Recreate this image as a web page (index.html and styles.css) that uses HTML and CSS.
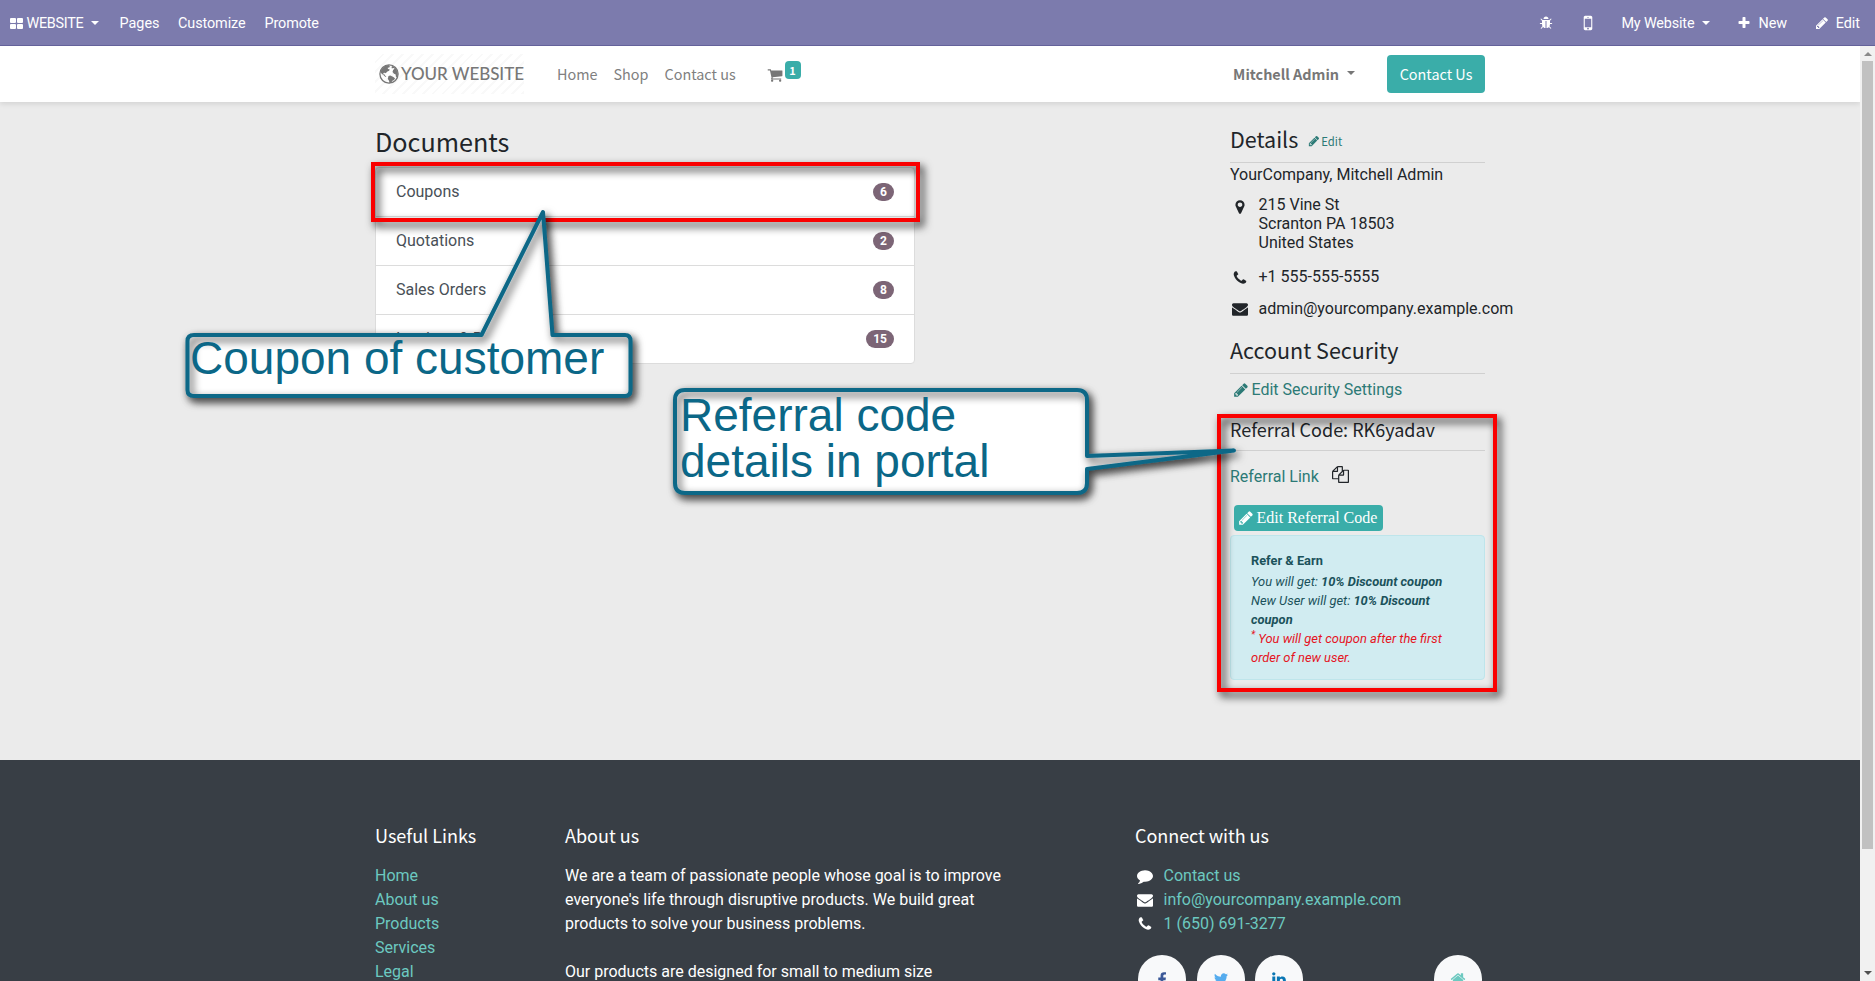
FILE: index.html
```html
<!DOCTYPE html>
<html lang="en">
<head>
<meta charset="utf-8">
<title>My Portal | My Website</title>
<link rel="stylesheet" href="styles.css">
</head>
<body>
<svg class="sprite" aria-hidden="true">
<symbol id="pencil" viewBox="0 0 1792 1792"><path d="M491 1536l91-91-235-235-91 91v107h128v128h107zm523-928q0-22-22-22-10 0-17 7l-542 542q-7 7-7 17 0 22 22 22 10 0 17-7l542-542q7-7 7-17zm-54-192l416 416-832 832h-416v-416zm683 96q0 53-37 90l-166 166-416-416 166-165q36-38 90-38 53 0 91 38l235 234q37 39 37 91z"/></symbol>
<symbol id="envelope" viewBox="0 0 1792 1792"><path d="M1792 710v794q0 66-47 113t-113 47h-1472q-66 0-113-47t-47-113v-794q44 49 101 87 362 246 497 345 57 42 92.500 65.500t94.500 48 110 24.500h2q51 0 110-24.500t94.500-48 92.500-65.500q170-123 498-345 57-39 100-87zm0-294q0 79-49 151t-122 123q-376 261-468 325-10 7-42.500 30.500t-54 38-52 32.500-57.500 27-50 9h-2q-23 0-50-9t-57.500-27-52-32.500-54-38-42.500-30.500q-91-64-262-182.500t-205-142.500q-62-42-117-115.500t-55-136.500q0-78 41.500-130t118.500-52h1472q65 0 112.500 47t47.500 113z"/></symbol>
<symbol id="phone" viewBox="0 0 1792 1792"><path d="M1600 1240q0 27-10 70.500t-21 68.500q-21 50-122 106-94 51-186 51-27 0-53-3.500t-57.500-12.500-47-14.500-55.500-20.500-49-18q-98-35-175-83-127-79-264-216t-216-264q-48-77-83-175-3-9-18-49t-20.500-55.500-14.500-47-12.500-57.500-3.500-53q0-92 51-186 56-101 106-122 25-11 68.500-21t70.500-10q14 0 21 3 18 6 53 76 11 19 30 54t35 63.500 31 53.500q3 4 17.500 25t21.500 35.500 7 28.500q0 20-28.500 50t-62 55-62 53-28.500 46q0 9 5 22.500t8.500 20.500 14 24 11.500 19q76 137 174 235t235 174q2 1 19 11.500t24 14 20.500 8.500 22.500 5q18 0 46-28.500t53-62 55-62 50-28.500q14 0 28.500 7t35.500 21.500 25 17.500q25 15 53.500 31t63.500 35 54 30q70 35 76 53 3 7 3 21z"/></symbol>
<symbol id="marker" viewBox="0 0 1792 1792"><path d="M1152 640q0-106-75-181t-181-75-181 75-75 181 75 181 181 75 181-75 75-181zm256 0q0 109-33 179l-364 774q-16 33-47.500 52t-67.500 19-67.500-19-46.500-52l-365-774q-33-70-33-179 0-212 150-362t362-150 362 150 150 362z"/></symbol>
<symbol id="bug" viewBox="0 0 1792 1792"><path d="M1696 960q0 26-19 45t-45 19h-224q0 171-67 290l208 209q19 19 19 45t-19 45q-18 19-45 19t-45-19l-198-197q-5 5-15 13t-42 28.500-65 36.500-82 29-97 13v-896h-128v896q-51 0-101.500-13.500t-87-33-66-39-43.500-32.500l-15-14-183 207q-20 21-48 21-24 0-43-16-19-18-20.500-44.500t15.500-46.500l202-227q-58-114-58-274h-224q-26 0-45-19t-19-45 19-45 45-19h224v-294l-173-173q-19-19-19-45t19-45 45-19 45 19l173 173h844l173-173q19-19 45-19t45 19 19 45-19 45l-173 173v294h224q26 0 45 19t19 45zm-480-576h-640q0-133 93.500-226.500t226.500-93.500 226.500 93.500 93.500 226.500z"/></symbol>
<symbol id="mobile" viewBox="0 0 1792 1792"><path d="M976 1408q0-33-23.500-56.500t-56.500-23.500-56.500 23.500-23.500 56.500 23.500 56.500 56.500 23.500 56.500-23.500 23.500-56.500zm208-160v-704q0-13-9.500-22.500t-22.500-9.500h-512q-13 0-22.500 9.500t-9.500 22.500v704q0 13 9.500 22.500t22.500 9.500h512q13 0 22.500-9.500t9.500-22.500zm-192-848q0-16-16-16h-160q-16 0-16 16t16 16h160q16 0 16-16zm288-16v1024q0 52-38 90t-90 38h-512q-52 0-90-38t-38-90v-1024q0-52 38-90t90-38h512q52 0 90 38t38 90z"/></symbol>
<symbol id="plus" viewBox="0 0 1792 1792"><path d="M1600 736v192q0 40-28 68t-68 28h-416v416q0 40-28 68t-68 28h-192q-40 0-68-28t-28-68v-416h-416q-40 0-68-28t-28-68v-192q0-40 28-68t68-28h416v-416q0-40 28-68t68-28h192q40 0 68 28t28 68v416h416q40 0 68 28t28 68z"/></symbol>
<symbol id="cart" viewBox="0 0 1792 1792"><path d="M704 1536q0 52-38 90t-90 38-90-38-38-90 38-90 90-38 90 38 38 90zm896 0q0 52-38 90t-90 38-90-38-38-90 38-90 90-38 90 38 38 90zm128-1088v512q0 24-16.500 42.500t-40.500 21.500l-1044 122q13 60 13 70 0 16-24 64h920q26 0 45 19t19 45-19 45-45 19h-1024q-26 0-45-19t-19-45q0-11 8-31.500t16-36 21.500-40 15.500-29.500l-177-823h-204q-26 0-45-19t-19-45 19-45 45-19h256q16 0 28.500 6.500t19.500 15.500 13 24.500 8 26 5.500 29.500 4.500 26h1201q26 0 45 19t19 45z"/></symbol>
<symbol id="comment" viewBox="0 0 1792 1792"><path d="M1792 896q0 174-120 321.500t-326 233-450 85.500q-70 0-145-8-198 175-460 242-49 14-114 22-17 2-30.500-9t-17.500-29v-1q-3-4-.5-12t2-10 4.500-9.500l6-9 7-8.500 8-9q7-8 31-34.500t34.500-38 31-39.500 32.500-51 27-59 26-76q-157-89-247.500-220t-90.500-281q0-130 71-248.500t191-204.500 286-136.500 348-50.500q244 0 450 85.500t326 233 120 321.500z"/></symbol>
<symbol id="files" viewBox="0 0 1792 1792"><path d="M1696 384q40 0 68 28t28 68v1216q0 40-28 68t-68 28h-960q-40 0-68-28t-28-68v-288h-544q-40 0-68-28t-28-68v-672q0-40 20-88t48-76l408-408q28-28 76-48t88-20h416q40 0 68 28t28 68v328q68-40 128-40h416zm-544 213l-299 299h299v-299zm-640-384l-299 299h299v-299zm196 647l316-316v-416h-384v416q0 40-28 68t-68 28h-416v640h512v-256q0-40 20-88t48-76zm956 804v-1152h-384v416q0 40-28 68t-68 28h-416v640h896z"/></symbol>
<symbol id="twitter" viewBox="0 0 1792 1792"><path d="M1684 408q-67 98-162 167 1 14 1 42 0 130-38 259.500t-115.500 248.500-184.500 210.500-258 146-323 54.500q-271 0-496-145 35 4 78 4 225 0 401-138-105-2-188-64.500t-114-159.500q33 5 61 5 43 0 85-11-112-23-185.500-111.500t-73.500-205.500v-4q68 38 146 41-66-44-105-115t-39-154q0-88 44-163 121 149 294.500 238.500t371.500 99.500q-8-38-8-74 0-134 94.500-228.500t228.500-94.500q140 0 236 102 109-21 205-78-37 115-142 178 93-10 186-50z"/></symbol>
<symbol id="facebook" viewBox="0 0 1792 1792"><path d="M1343 12v264h-157q-86 0-116 36t-30 108v189h293l-39 296h-254v759h-306v-759h-255v-296h255v-218q0-186 104-288.500t277-102.500q147 0 228 12z" transform="translate(0 128)"/></symbol>
<symbol id="linkedin" viewBox="0 0 1792 1792"><path d="M477 625v991h-330v-991h330zm21-306q1 73-50.500 122t-135.500 49h-2q-82 0-132-49t-50-122q0-74 51.500-122.500t134.500-48.500 133 48.500 51 122.500zm1166 729v568h-329v-530q0-105-40.500-164.500t-126.500-59.500q-63 0-105.500 34.500t-63.500 85.500q-11 30-11 81v553h-329q2-399 2-647t-1-296l-1-48h329v144h-2q20-32 41-56t56.500-52 87-43.500 114.500-15.500q171 0 275 113.500t104 332.500z"/></symbol>
<symbol id="home" viewBox="0 0 1792 1792"><path d="M1472 992v480q0 26-19 45t-45 19h-384v-384h-256v384h-384q-26 0-45-19t-19-45v-480q0-1 .5-3t.5-3l575-474 575 474q1 2 1 6zm223-69l-62 74q-8 9-21 11h-3q-13 0-21-7l-692-577-692 577q-12 8-24 7-13-2-21-11l-62-74q-8-10-7-23.500t11-21.500l719-599q32-26 76-26t76 26l244 204v-195q0-14 9-23t23-9h192q14 0 23 9t9 23v408l219 182q10 8 11 21.500t-7 23.500z"/></symbol>
</svg>

<nav class="topbar">
  <div class="topbar-left">
    <a class="top-item brand"><svg class="grid-icon" viewBox="0 0 13 11"><rect width="6" height="5" rx="1"/><rect x="7" width="6" height="5" rx="1"/><rect y="6" width="6" height="5" rx="1"/><rect x="7" y="6" width="6" height="5" rx="1"/></svg><span>WEBSITE</span><i class="caret"></i></a>
    <a class="top-item pages">Pages</a>
    <a class="top-item customize">Customize</a>
    <a class="top-item promote">Promote</a>
  </div>
  <div class="topbar-right">
    <svg class="ic14 bug"><use href="#bug"/></svg>
    <svg class="ic-mobile"><use href="#mobile"/></svg>
    <a class="top-item my-site">My Website<i class="caret"></i></a>
    <a class="top-item new"><svg class="ic14"><use href="#plus"/></svg>New</a>
    <a class="top-item edit"><svg class="ic14"><use href="#pencil"/></svg>Edit</a>
  </div>
</nav>

<div class="viewport">
<div class="page">
  <header class="site-header">
    <div class="container header-row">
      <div class="logo">
        <svg class="globe" viewBox="0 0 20 20"><circle cx="10" cy="10" r="9.1" fill="none" stroke="#777" stroke-width="1.3"/><path fill="#777" d="M2 6.500C3.500 3 6.500 1.200 9.500 1l1.400 1.100-.6 1.300-1.600.4.300 1.200 1.600.2-.4 1.500-1.800.7-1.700 1.800-1.300-.5-1.100.3.200 1.400 1.300.2.600 1.500 1 .5-.9.300L4.700 11.300 2.400 9.400 1.500 8zM9.500 12l1.700-.5 2.800 1.200 2 1.500-.9 1.700-1.700.8-1.200 2-1.700.5-.4-2.100-1.300-2.300zM13 1.700l3.500 2.300 2 3.500.4 3.500-.9 2.500-1.200-1.100-.1-1.900-1.700-.7-1.500-1.700.6-2.200 1.500-1.300-1.400-.6-1.300.4-.4-1.300.9-1.300z"/></svg><span>YOUR WEBSITE</span>
      </div>
      <a class="nav-link home">Home</a><a class="nav-link shop">Shop</a><a class="nav-link contact">Contact us</a>
      <span class="cart"><svg><use href="#cart"/></svg><b>1</b></span>
      <a class="user">Mitchell Admin<i class="caret"></i></a>
      <a class="cta">Contact Us</a>
    </div>
  </header>

  <main class="container main">
    <section class="docs">
      <h3>Documents</h3>
      <div class="list">
        <a class="row"><span>Coupons</span><b>6</b></a>
        <a class="row"><span>Quotations</span><b>2</b></a>
        <a class="row"><span>Sales Orders</span><b>8</b></a>
        <a class="row"><span>Invoices &amp; Bills</span><b>15</b></a>
      </div>
    </section>
    <aside class="side">
      <div class="side-title details"><h4>Details</h4><a><svg><use href="#pencil"/></svg>Edit</a></div>
      <p class="company">YourCompany, Mitchell Admin</p>
      <div class="info address"><svg><use href="#marker"/></svg><p>215 Vine St<br>Scranton PA 18503<br>United States</p></div>
      <div class="info tel"><svg><use href="#phone"/></svg><p>+1 555-555-5555</p></div>
      <div class="info mail"><svg><use href="#envelope"/></svg><p>admin@yourcompany.example.com</p></div>
      <div class="side-title security"><h4>Account Security</h4></div>
      <a class="sec-link"><svg><use href="#pencil"/></svg>Edit Security Settings</a>
      <div class="side-title referral"><h5>Referral Code: RK6yadav</h5></div>
      <div class="ref-link"><a>Referral Link</a><svg><use href="#files"/></svg></div>
      <a class="ref-btn"><svg><use href="#pencil"/></svg>Edit Referral Code</a>
      <div class="alert">
        <strong class="alert-title">Refer &amp; Earn</strong>
        <p>You will get: <b>10% Discount coupon</b></p>
        <p>New User will get: <b>10% Discount<br>coupon</b></p>
        <p class="warn"><sup>*</sup> You will get coupon after the first<br>order of new user.</p>
      </div>
    </aside>
  </main>

  <footer class="footer">
    <div class="container foot-row">
      <div class="links"><h5>Useful Links</h5><a>Home</a><a>About us</a><a>Products</a><a>Services</a><a>Legal</a></div>
      <div class="about"><h5>About us</h5><p>We are a team of passionate people whose goal is to improve<br>everyone's life through disruptive products. We build great<br>products to solve your business problems.<br><br>Our products are designed for small to medium size</p></div>
      <div class="connect"><h5>Connect with us</h5>
        <div class="c-row"><svg><use href="#comment"/></svg><a>Contact us</a></div>
        <div class="c-row"><svg><use href="#envelope"/></svg><a>info@yourcompany.example.com</a></div>
        <div class="c-row"><svg><use href="#phone"/></svg><a>1 (650) 691-3277</a></div>
        <div class="social">
          <span class="fb"><svg><use href="#facebook"/></svg></span><span class="tw"><svg><use href="#twitter"/></svg></span><span class="li"><svg><use href="#linkedin"/></svg></span><span class="hm"><svg><use href="#home"/></svg></span>
        </div>
      </div>
    </div>
  </footer>
</div>
<div class="scrollbar"><i class="up"></i><div class="thumb"></div><i class="down"></i></div>
</div>

<svg class="notes" width="1875" height="981" viewBox="0 0 1875 981">
  <defs>
    <filter id="shade" filterUnits="userSpaceOnUse" x="0" y="0" width="1875" height="981"><feDropShadow dx="3" dy="4" stdDeviation="4" flood-color="#000" flood-opacity=".75"/></filter>
    <filter id="shade-box" filterUnits="userSpaceOnUse" x="0" y="0" width="1875" height="981"><feDropShadow dx="3.500" dy="4.500" stdDeviation="4.500" flood-color="#000" flood-opacity=".9"/></filter>
    <path id="bubble-a" d="M194 335H481.500L543 212 552.500 335H625Q630.500 335 630.500 341V390Q630.500 396 625 396H194Q187.500 396 187.500 390V341Q187.500 335 194 335Z"/>
    <path id="bubble-b" d="M685 390H1077Q1087 390 1087 400V456L1234 450.500 1087 469V483Q1087 493 1077 493H685Q675 493 675 483V400Q675 390 685 390Z"/>
  </defs>
  <g fill="none" stroke="#fa0000" stroke-width="4" filter="url(#shade-box)">
    <rect x="373" y="164" width="545" height="56"/>
    <rect x="1219" y="416" width="276" height="274"/>
  </g>
  <g stroke-linejoin="round">
    <use href="#bubble-a" fill="#fff" filter="url(#shade)"/>
    <use href="#bubble-b" fill="#fff" filter="url(#shade)"/>
    <use href="#bubble-a" fill="none" stroke="#0b6787" stroke-width="4" filter="url(#shade)"/>
    <use href="#bubble-b" fill="none" stroke="#0b6787" stroke-width="4" filter="url(#shade)"/>
  </g>
  <g class="note-text">
    <text x="190" y="373.500">Coupon of customer</text>
    <text x="680" y="431">Referral code</text>
    <text x="680" y="477">details in portal</text>
  </g>
</svg>
</body>
</html>
```
FILE: styles.css
```css
* { box-sizing: border-box; }
body { margin: 0; height: 981px; overflow: hidden; position: relative; background: #ebebeb; color: #212529; font: 16px/24px Roboto, "Liberation Sans", sans-serif; }
h3, h4, h5, p { margin: 0; font-weight: 400; }
svg { display: block; flex: none; fill: currentColor; }
i { font-style: normal; }
.sprite { position: absolute; width: 0; height: 0; }
h3, h4, h5, .nav-link, .user, .cta, .cart b, .details a { font-family: "Noto Sans CJK SC", "Open Sans", sans-serif; }

.topbar { height: 46px; background: #7c7bad; border-bottom: 1px solid #64629a; color: #fff; display: flex; justify-content: space-between; padding: 0 15px 0 10px; font-size: 14.400px; line-height: 46px; }
.topbar-left, .topbar-right { display: flex; align-items: center; height: 46px; padding-top: 2px; }
.top-item { display: flex; align-items: center; white-space: nowrap; }
.caret { width: 0; height: 0; border: 4.500px solid transparent; border-top-color: currentColor; border-bottom: 0; margin: -3px 0 0 8px; }
.grid-icon { width: 13px; height: 11px; margin: -2px 3.500px 0 0; }
.brand { width: 109.500px; letter-spacing: -.3px; }
.pages { width: 58.500px; }
.customize { width: 86.500px; letter-spacing: -.08px; }
.promote { letter-spacing: -.12px; }
.ic14 { width: 14px; height: 14px; margin-top: -2px; }
.bug { margin-right: 25px; }
.ic-mobile { width: 20px; height: 20px; margin: -2px 23px 0 0; }
.my-site { margin-right: 27px; letter-spacing: -.15px; }
.new { margin-right: 27.500px; }
.new .ic14, .edit .ic14 { margin-right: 7px; }

.viewport { display: flex; height: 935px; overflow: hidden; }
.page { width: 1860px; height: 935px; overflow: hidden; }
.scrollbar { width: 15px; background: #f1f1f1; display: flex; flex-direction: column; align-items: center; }
.up { border: 4px solid transparent; border-bottom: 4px solid #8a8a8a; border-top: 0; margin: 6px 0 5px; }
.thumb { width: 11px; height: 788px; background: #c1c1c1; }
.down { border: 4px solid transparent; border-top: 4px solid #505050; border-bottom: 0; margin-top: auto; margin-bottom: 6px; }
.container { width: 1110px; margin: 0 auto; }

.site-header { height: 56px; background: #fff; box-shadow: 0 2px 5px rgba(0, 0, 0, .1); position: relative; }
.header-row { display: flex; align-items: center; height: 56px; }
.logo { width: 149px; height: 40px; margin-right: 33px; padding-left: 4px; display: flex; align-items: center; color: #777; font: 500 17px/42px Lato, sans-serif; letter-spacing: -.05px; white-space: nowrap; background: repeating-linear-gradient(135deg, #fff 0 5px, #f9f9f9 5px 7px); }
.globe { width: 20px; height: 20px; margin-right: 2px; }
.nav-link { color: #808080; font-size: 14.400px; white-space: nowrap; }
.home { width: 56.500px; } .shop { width: 51px; } .contact { width: 102px; }
.cart { display: flex; color: #777; }
.cart svg { width: 16px; height: 16px; margin-top: 1px; }
.cart b { width: 16px; height: 18px; margin: -5px 0 0 2px; border-radius: 4px; background: #3aada9; color: #fff; font-size: 11px; line-height: 18px; text-align: center; }
.user { margin-left: auto; color: #777; font-weight: 700; font-size: 14.400px; display: flex; align-items: center; }
.cta { margin-left: 32px; width: 98px; height: 38px; border-radius: 4px; background: #3aada9; color: #fff; font-size: 14.400px; line-height: 37px; text-align: center; }

.main { height: 658px; display: flex; justify-content: space-between; }
.docs { width: 540px; padding-top: 23px; }
.docs h3 { font-size: 25.200px; line-height: 33px; height: 42px; }
.list { border: 1px solid #dcdcdc; border-radius: 4px; background: #fff; }
.row { display: flex; justify-content: space-between; align-items: center; height: 49px; padding: 0 20px; color: #495057; border-bottom: 1px solid #dcdcdc; }
.row:last-child { border-bottom: 0; height: 48px; }
.row b { min-width: 21px; height: 18px; padding: 0 7px; border-radius: 9px; background: #7c6576; color: #fff; font-size: 12px; line-height: 18px; text-align: center; }

.side { width: 255px; padding-top: 22px; }
.side-title { border-bottom: 1px solid #d0d0d0; display: flex; align-items: center; white-space: nowrap; }
.side h4 { font-size: 21.500px; line-height: 30px; }
.details { height: 39px; padding-bottom: 8px; }
.details a { display: flex; align-items: center; color: #2c7a76; font-size: 11.300px; margin: 4px 0 0 10px; }
.details a svg { width: 12px; height: 12px; margin-right: 1px; }
.company { line-height: 24px; }
.info { display: flex; white-space: nowrap; }
.info svg { width: 16px; height: 16px; margin: 3px 10.500px 0 2px; }
.info p { line-height: 19px; }
.address { margin-top: 8px; }
.address svg { margin-top: 4px; }
.tel { margin-top: 15px; }
.mail { margin-top: 13px; }
.mail svg { margin-top: 2px; }
.security { margin-top: 16px; height: 40px; padding-bottom: 8px; }
.sec-link { display: flex; align-items: center; height: 30px; padding: 2px 0 0 3px; color: #2c7a76; }
.sec-link svg, .ref-btn svg { width: 16px; height: 16px; margin-right: 2.500px; }
.referral { height: 47px; padding-top: 3px; }
.side h5 { font-size: 18px; line-height: 24px; }
.ref-link { display: flex; margin-top: 13px; height: 41px; color: #2c7a76; align-items: flex-start; line-height: 26px; }
.ref-link svg { width: 17px; height: 17px; margin: 2px 0 0 13px; color: #212529; }
.ref-btn { display: flex; align-items: center; width: 149px; height: 26px; margin-left: 4px; padding-left: 4px; border-radius: 4px; background: #3aada9; color: #fff; font-family: "Liberation Serif", serif; font-size: 16px; white-space: nowrap; }
.alert { margin-top: 4px; width: 255px; height: 145px; border: 1px solid #bee5eb; border-radius: 4px; background: #d1ecf1; padding: 15px 0 0 20px; color: #1b525b; font-size: 12.900px; line-height: 19px; font-style: italic; white-space: nowrap; }
.alert-title { display: block; height: 21px; font-size: 12.800px; font-style: normal; }
.warn { color: #e5141f; }
.warn sup { font-size: 10px; line-height: 0; }

.footer { height: 221px; background: #383e45; color: #fff; }
.foot-row { display: flex; padding-top: 62px; white-space: nowrap; }
.footer h5 { font-size: 18px; line-height: 26px; height: 42px; }
.footer a { color: #6cc9c0; }
.links { width: 190px; display: flex; flex-direction: column; }
.about { width: 570px; }
.connect { width: 350px; }
.connect h5 { letter-spacing: -.05px; }
.c-row { display: flex; align-items: center; height: 24px; }
.c-row svg { width: 16px; height: 16px; margin: 0 11px 0 1.500px; }
.social { display: flex; margin: 19px 0 0 3px; }
.social span { width: 48px; height: 48px; border-radius: 50%; background: #f8f9fa; display: flex; align-items: center; justify-content: center; margin-right: 10.500px; }
.social svg { width: 16px; height: 16px; }
.social .hm { margin: 0 3px 0 auto; }
.fb { color: #3b5998; } .tw { color: #55acee; } .li { color: #0976b4; } .hm { color: #6cc9c0; }

.notes { position: absolute; left: 0; top: 0; }
.note-text { font: 46px "Liberation Sans", Arial, sans-serif; fill: #0b6787; }
```
